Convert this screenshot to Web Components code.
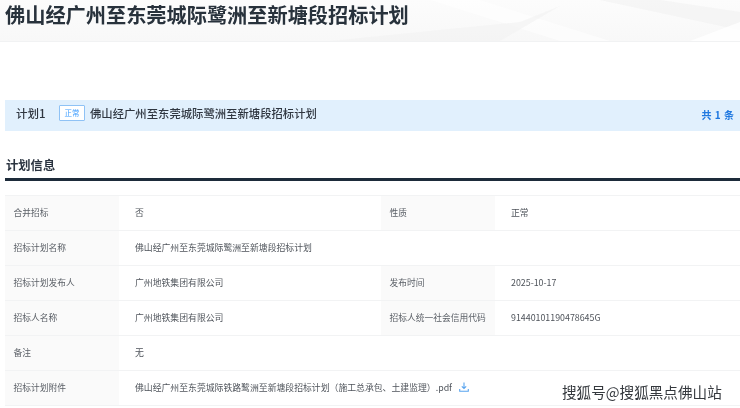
<!DOCTYPE html>
<html lang="zh">
<head>
<meta charset="utf-8">
<title>招标计划</title>
<style>
  html, body { margin: 0; padding: 0; background: #fff; overflow: hidden; }
  body { width: 740px; height: 408px; font-family: "Noto Sans CJK SC", "Noto Sans", sans-serif; color: #303133; }
</style>
</head>
<body>
<plan-page>
  <page-header>佛山经广州至东莞城际鹭洲至新塘段招标计划</page-header>
  <plan-banner label="计划1" status="正常" total="共 1 条">佛山经广州至东莞城际鹭洲至新塘段招标计划</plan-banner>
  <section-title>计划信息</section-title>
  <info-table>
    <info-cell kind="label">合并招标</info-cell>
    <info-cell>否</info-cell>
    <info-cell kind="label">性质</info-cell>
    <info-cell>正常</info-cell>

    <info-cell kind="label">招标计划名称</info-cell>
    <info-cell wide>佛山经广州至东莞城际鹭洲至新塘段招标计划</info-cell>

    <info-cell kind="label">招标计划发布人</info-cell>
    <info-cell>广州地铁集团有限公司</info-cell>
    <info-cell kind="label">发布时间</info-cell>
    <info-cell>2025-10-17</info-cell>

    <info-cell kind="label">招标人名称</info-cell>
    <info-cell>广州地铁集团有限公司</info-cell>
    <info-cell kind="label">招标人统一社会信用代码</info-cell>
    <info-cell>91440101190478645G</info-cell>

    <info-cell kind="label">备注</info-cell>
    <info-cell wide>无</info-cell>

    <info-cell kind="label">招标计划附件</info-cell>
    <info-cell wide>佛山经广州至东莞城际铁路鹭洲至新塘段招标计划（施工总承包、土建监理）.pdf<download-icon></download-icon></info-cell>
  </info-table>
  <water-mark>搜狐号@搜狐黑点佛山站</water-mark>
</plan-page>

<script>
class PlanPage extends HTMLElement {
  constructor() {
    super();
    this.attachShadow({ mode: 'open' });
    this.shadowRoot.innerHTML = `
      <style>
        :host { display: block; position: relative; width: 740px; height: 408px; overflow: hidden; filter: blur(0.35px); }
      </style>
      <slot></slot>
    `;
  }
}

class PageHeader extends HTMLElement {
  constructor() {
    super();
    this.attachShadow({ mode: 'open' });
    this.shadowRoot.innerHTML = `
      <style>
        :host {
          display: block;
          position: relative;
          height: 41px;
          padding-left: 5px;
          margin-bottom: 58px;
          border-bottom: 1px solid #f1f2f3;
          background: linear-gradient(180deg, #fcfcfc 0%, #f8f8f8 100%);
          overflow: hidden;
        }
        svg { position: absolute; inset: 0; }
        h1 {
          position: relative;
          margin: 0;
          font-size: 20.2px;
          line-height: 29px;
          font-weight: 700;
          color: #28323c;
          white-space: nowrap;
        }
      </style>
      <svg width="740" height="41" viewBox="0 0 740 41">
        <path d="M430 0 L560 41 L610 41 L480 0Z" fill="#fff" opacity=".55"/>
        <path d="M330 41 L520 22 L560 6 L500 41Z" fill="#f1f1f1" opacity=".6"/>
        <path d="M600 0 L740 30 L740 12 L660 0Z" fill="#f0f0f0" opacity=".5"/>
        <path d="M690 41 L740 22 L740 41Z" fill="#fff" opacity=".8"/>
      </svg>
      <h1><slot></slot></h1>
    `;
  }
}

class PlanBanner extends HTMLElement {
  constructor() {
    super();
    this.attachShadow({ mode: 'open' });
    this.shadowRoot.innerHTML = `
      <style>
        :host {
          display: flex;
          align-items: center;
          height: 31px;
          margin-left: 5px;
          padding: 0 6px 6px 11px;
          box-sizing: border-box;
          background: #e1f0fd;
          color: #2f3640;
          white-space: nowrap;
        }
        .label { font-size: 11.5px; font-weight: 500; width: 43px; }
        .tag {
          box-sizing: border-box;
          width: 26px;
          height: 16px;
          margin-right: 5px;
          border: 1px solid #8fc2f5;
          border-radius: 1px;
          background: #fff;
          color: #409eff;
          font-size: 7.5px;
          line-height: 14px;
          text-align: center;
        }
        .name { flex: 1; font-size: 11.35px; font-weight: 500; }
        .total { margin-top: 4px; font-size: 10px; font-weight: 700; color: #1f78e0; word-spacing: 1px; }
      </style>
      <span class="label"></span>
      <span class="tag"></span>
      <span class="name"><slot></slot></span>
      <span class="total"></span>
    `;
  }

  connectedCallback() {
    this.shadowRoot.querySelector('.label').textContent = this.getAttribute('label') || '';
    this.shadowRoot.querySelector('.tag').textContent = this.getAttribute('status') || '';
    this.shadowRoot.querySelector('.total').textContent = this.getAttribute('total') || '';
  }
}

class SectionTitle extends HTMLElement {
  constructor() {
    super();
    this.attachShadow({ mode: 'open' });
    this.shadowRoot.innerHTML = `
      <style>
        :host {
          display: block;
          box-sizing: border-box;
          height: 50px;
          margin: 0 0 14px 5px;
          padding: 24px 0 0 1px;
          border-bottom: 3px solid #1d2b3a;
          font-size: 12.3px;
          line-height: 20px;
          font-weight: 700;
          color: #2b3440;
        }
      </style>
      <slot></slot>
    `;
  }
}

class InfoTable extends HTMLElement {
  constructor() {
    super();
    this.attachShadow({ mode: 'open' });
    this.shadowRoot.innerHTML = `
      <style>
        :host {
          display: grid;
          grid-template-columns: 114px 262px 114px 1fr;
          grid-auto-rows: 35px;
          margin-left: 5px;
          border-top: 1px solid #f2f3f4;
        }
      </style>
      <slot></slot>
    `;
  }
}

class InfoCell extends HTMLElement {
  constructor() {
    super();
    this.attachShadow({ mode: 'open' });
    this.shadowRoot.innerHTML = `
      <style>
        :host {
          display: flex;
          align-items: center;
          box-sizing: border-box;
          padding: 0 0 2px 16px;
          border-bottom: 1px solid #f2f3f4;
          font-size: 8.85px;
          color: #4f545b;
          white-space: nowrap;
        }
        :host([wide]) { grid-column: span 3; }
        :host([kind="label"]) {
          padding-left: 8.5px;
          background: #fafafa;
          font-size: 8.75px;
          color: #5a5f66;
        }
      </style>
      <slot></slot>
    `;
  }
}

class DownloadIcon extends HTMLElement {
  constructor() {
    super();
    this.attachShadow({ mode: 'open' });
    this.shadowRoot.innerHTML = `
      <style>
        :host { display: inline-flex; margin-left: 7px; }
      </style>
      <svg width="10" height="10" viewBox="0 0 10 10" fill="none" stroke="#5aa5ef" stroke-width="1.1">
        <path d="M5 .5V6.4M2.8 4.3 5 6.5 7.2 4.3"/>
        <path d="M.7 7V9.2H9.3V7"/>
      </svg>
    `;
  }
}

class WaterMark extends HTMLElement {
  constructor() {
    super();
    this.attachShadow({ mode: 'open' });
    this.shadowRoot.innerHTML = `
      <style>
        :host {
          position: absolute;
          left: 562px;
          top: 381px;
          font-size: 14.6px;
          line-height: 21px;
          font-weight: 400;
          color: #35393e;
          white-space: nowrap;
          text-shadow: 1px 0 0 #fff, -1px 0 0 #fff, 0 1px 0 #fff, 0 -1px 0 #fff, 1px 1px 0 #fff, -1px -1px 0 #fff, 1px -1px 0 #fff, -1px 1px 0 #fff;
        }
      </style>
      <slot></slot>
    `;
  }
}

customElements.define('plan-page', PlanPage);
customElements.define('page-header', PageHeader);
customElements.define('plan-banner', PlanBanner);
customElements.define('section-title', SectionTitle);
customElements.define('info-table', InfoTable);
customElements.define('info-cell', InfoCell);
customElements.define('download-icon', DownloadIcon);
customElements.define('water-mark', WaterMark);
</script>
</body>
</html>
